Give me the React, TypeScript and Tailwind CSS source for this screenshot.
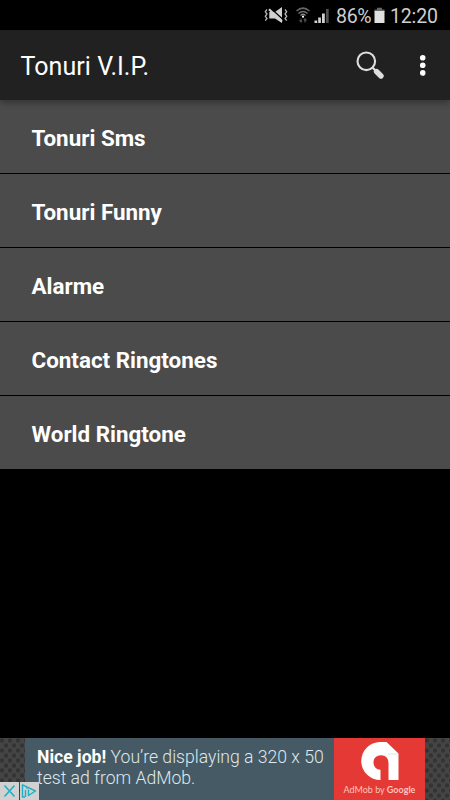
const categories = ['Tonuri Sms', 'Tonuri Funny', 'Alarme', 'Contact Ringtones', 'World Ringtone'];

function VibrateMuteIcon() {
  return (
    <svg className="h-[18px] w-6 shrink-0" viewBox="0 0 24 18" fill="none">
      <path d="M5.300 6H11L18 1v16L11 12.500H5.300z" fill="#d0d0d0" />
      <path d="M6.500 2 19 13.500" stroke="#000" strokeWidth="1.300" />
      <path d="M5 3.300 18 15.600" stroke="#d0d0d0" strokeWidth="2.200" />
      <path d="M3 3.500 1.300 5.700 3 8 1.300 10.300 3 12.500 1.300 14.700M21 3.500l1.700 2.200L21 8l1.700 2.300L21 12.500l1.700 2.200" stroke="#b5b5b5" strokeWidth="1.300" />
    </svg>
  );
}

function WifiIcon() {
  return (
    <svg className="ml-2 h-[18px] w-[14px] shrink-0" viewBox="0 0 14 18" fill="none">
      <path d="M.5 5Q7-.8 13.500 5" stroke="#666" strokeWidth="1.500" />
      <path d="M2.500 7.500Q7 3.500 11.500 7.500" stroke="#707070" strokeWidth="1.500" />
      <path d="M4.500 9.500Q7 7 9.500 9.500" stroke="#888" strokeWidth="1.200" />
      <circle cx="7" cy="10.700" r="1.100" fill="#fff" />
      <path d="M5 12.500V16M3.500 14 5 16l1-1.300M9 16.500V13M8 14.300 9 13l1.500 1.500" stroke="#505050" strokeWidth="1.200" />
    </svg>
  );
}

function SignalIcon() {
  return (
    <svg className="ml-[4px] h-[18px] w-4 shrink-0" viewBox="0 0 16 18">
      <path d="M.5 14.500h2.700V17H.5z" fill="#d2d2d2" />
      <path d="M4.200 11.500h2.700V17H4.200z" fill="#d2d2d2" />
      <path d="M8 7.500h2.800V17H8z" fill="#d2d2d2" />
      <path d="M12 3h2.700v14H12z" fill="#505050" />
    </svg>
  );
}

function BatteryIcon() {
  return (
    <svg className="h-[18px] w-[11px] shrink-0" viewBox="0 0 11 18">
      <path d="M3 1.800h5V3.500h2.500V6H.5V3.500H3z" fill="#666" />
      <path d="M.5 5h10v12H.5z" fill="#e0e0e0" />
    </svg>
  );
}

function StatusBar() {
  return (
    <header className="flex h-[30px] items-center bg-black pl-[264px] text-[19.500px] text-[#cecece]">
      <VibrateMuteIcon />
      <WifiIcon />
      <SignalIcon />
      <span className="ml-[6px] w-[38px] whitespace-nowrap pt-[3px] leading-none tracking-[-0.3px]">86%</span>
      <BatteryIcon />
      <span className="ml-[5px] whitespace-nowrap pt-[3px] leading-none tracking-[-0.15px]">12:20</span>
    </header>
  );
}

function Toolbar() {
  return (
    <div className="z-10 flex h-[70px] items-center bg-[#212121] pl-[20.500px] text-white shadow-[0_3px_6px_rgba(0,0,0,0.3)]">
      <h1 className="w-[335.500px] pt-[3px] text-[25px] leading-none tracking-[0.05px]">Tonuri V.I.P.</h1>
      <button aria-label="Search">
        <svg className="block h-[30px] w-[30px]" viewBox="0 0 30 30" fill="none">
          <circle cx="10.300" cy="11.300" r="8.800" stroke="#dedede" strokeWidth="2.100" />
          <path d="m16.500 17.500 3 3" stroke="#dedede" strokeWidth="2.200" />
          <path d="m20.500 21.500 4.500 4.500" stroke="#dedede" strokeWidth="5.400" strokeLinecap="round" />
        </svg>
      </button>
      <button aria-label="More options" className="ml-[34px]">
        <svg className="block h-[30px] w-[6px]" viewBox="0 0 6 30" fill="#fff">
          <circle cx="2.700" cy="7.700" r="2.800" />
          <circle cx="2.700" cy="15.300" r="2.800" />
          <circle cx="2.700" cy="22.900" r="2.800" />
        </svg>
      </button>
    </div>
  );
}

function MeshPattern() {
  return (
    <svg className="h-full w-[25px] shrink-0">
      <defs>
        <pattern id="mesh" width="8" height="10" patternUnits="userSpaceOnUse">
          <path d="M0 0h8v10H0z" fill="#454545" />
          <circle cx="2" cy="2.500" r="2.200" fill="#343434" />
          <circle cx="6" cy="7.500" r="2.200" fill="#343434" />
        </pattern>
      </defs>
      <rect width="100%" height="100%" fill="url(#mesh)" />
    </svg>
  );
}

function AdBanner() {
  return (
    <aside className="relative flex h-[62px] bg-[#444]">
      <MeshPattern />
      <div className="w-[309px] whitespace-nowrap bg-[#455a64] pl-3 pt-[9px] text-[17.600px] font-light leading-[21px] text-[#dfe8ec]">
        <p><b className="font-bold text-white">Nice job!</b> You’re displaying a 320 x 50</p>
        <p>test ad from AdMob.</p>
      </div>
      <div className="flex w-[91px] flex-col items-center bg-[#e53935]">
        <svg className="mt-1 h-[39px] w-[38px] shrink-0" viewBox="0 0 38 39">
          <path d="M19 0h6.500L37.500 11.500V38H27.500V21.500C27.500 16 24.500 13.300 20 13.300s-7.500 3-7.500 7.200 3 7.200 7 7.200V38A19 19 0 0 1 19 0z" fill="#fff" />
          <path d="M27 12h10.500" stroke="#ccc" strokeWidth=".6" />
        </svg>
        <p className="mt-[3px] whitespace-nowrap font-['Lato',sans-serif] text-[9px] leading-[12px] text-[#ffc4bd]">AdMob by <b className="font-bold">Google</b></p>
      </div>
      <MeshPattern />
      <div className="absolute bottom-0 left-0 flex h-[18px] w-[39px] gap-px">
        <svg className="h-[18px] w-[19px] bg-[#d1d1d1]" viewBox="0 0 19 18" fill="none">
          <path d="m4.500 3.500 10 11m0-11-10 11" stroke="#20afc4" strokeWidth="1.600" />
        </svg>
        <svg className="h-[18px] w-[19px] bg-[#d1d1d1]" viewBox="0 0 19 18" fill="none">
          <path d="M5 15H2.500V2.800L15.500 9 8.500 13.500V7.500M5.500 15V8" stroke="#20afc4" strokeWidth="1.400" strokeLinejoin="round" />
          <circle cx="7" cy="5.900" r=".9" fill="#20afc4" />
        </svg>
      </div>
    </aside>
  );
}

export default function App() {
  return (
    <div className="flex h-[800px] w-[450px] flex-col overflow-hidden bg-black font-['Roboto',sans-serif]">
      <StatusBar />
      <Toolbar />
      <ul className="flex flex-1 flex-col gap-px">
        {categories.map((name) => (
          <li key={name} className="flex h-[73px] items-center bg-[#4b4b4b] pl-[31.500px] pt-[4px] text-[22.400px] font-bold leading-none text-white">
            {name}
          </li>
        ))}
      </ul>
      <AdBanner />
    </div>
  );
}
